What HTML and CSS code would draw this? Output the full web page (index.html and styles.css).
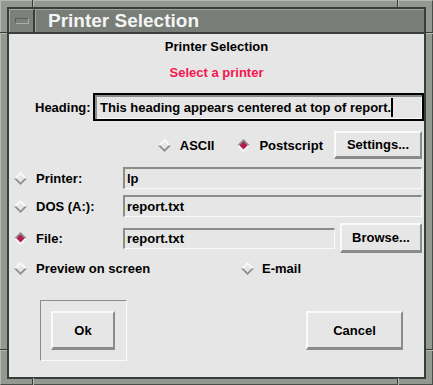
FILE: index.html
```html
<!DOCTYPE html>
<html>
<head>
<meta charset="utf-8">
<link rel="stylesheet" href="styles.css">
</head>
<body>
<div class="window">
  <span class="notch nv" style="left:31px;top:-1px"></span>
  <span class="notch nv" style="left:396px;top:-1px"></span>
  <span class="notch nv" style="left:31px;bottom:-1px"></span>
  <span class="notch nv" style="left:396px;bottom:-1px"></span>
  <span class="notch nh" style="top:31px;left:-1px"></span>
  <span class="notch nh" style="top:348px;left:-1px"></span>
  <span class="notch nh" style="top:31px;right:-1px"></span>
  <span class="notch nh" style="top:348px;right:-1px"></span>
  <div class="inner">
    <div class="titlerow">
      <div class="menubtn"><span class="menubar"></span></div>
      <div class="titlebar">Printer Selection</div>
    </div>
    <div class="content">
      <div class="heading">Printer Selection</div>
      <div class="prompt">Select a printer</div>
      <div class="head-row">
        <span class="head-label">Heading:</span>
        <div class="head-box"><span>This heading appears centered at top of report.</span><span class="caret"></span></div>
      </div>
      <div class="format-row">
        <svg class="radio r-ascii" width="13" height="13" viewBox="0 0 13 13"><polygon points="6.5,0 13,6.5 0,6.5" fill="#fafafa"/><polygon points="0,6.5 13,6.5 6.5,13" fill="#8a8e89"/><polygon points="6.5,2.5 10.5,6.5 6.5,10.5 2.5,6.5" fill="#e6e6e6"/></svg>
        <span class="ascii">ASCII</span>
        <svg class="radio r-ps" width="13" height="13" viewBox="0 0 13 13"><polygon points="6.5,0 13,6.5 0,6.5" fill="#8a8e89"/><polygon points="0,6.5 13,6.5 6.5,13" fill="#fafafa"/><polygon points="6.5,2.5 10.5,6.5 6.5,10.5 2.5,6.5" fill="#b51a55"/></svg>
        <span class="ps">Postscript</span>
        <button class="btn settings">Settings...</button>
      </div>
      <div class="dest-row">
        <div class="dest-label"><svg class="radio" width="13" height="13" viewBox="0 0 13 13"><polygon points="6.5,0 13,6.5 0,6.5" fill="#fafafa"/><polygon points="0,6.5 13,6.5 6.5,13" fill="#8a8e89"/><polygon points="6.5,2.5 10.5,6.5 6.5,10.5 2.5,6.5" fill="#e6e6e6"/></svg><span>Printer:</span></div>
        <div class="field">lp</div>
      </div>
      <div class="dest-row">
        <div class="dest-label"><svg class="radio" width="13" height="13" viewBox="0 0 13 13"><polygon points="6.5,0 13,6.5 0,6.5" fill="#fafafa"/><polygon points="0,6.5 13,6.5 6.5,13" fill="#8a8e89"/><polygon points="6.5,2.5 10.5,6.5 6.5,10.5 2.5,6.5" fill="#e6e6e6"/></svg><span>DOS (A:):</span></div>
        <div class="field">report.txt</div>
      </div>
      <div class="dest-row file-row">
        <div class="dest-label"><svg class="radio" width="13" height="13" viewBox="0 0 13 13"><polygon points="6.5,0 13,6.5 0,6.5" fill="#8a8e89"/><polygon points="0,6.5 13,6.5 6.5,13" fill="#fafafa"/><polygon points="6.5,2.5 10.5,6.5 6.5,10.5 2.5,6.5" fill="#b51a55"/></svg><span>File:</span></div>
        <div class="field">report.txt</div>
        <button class="btn browse">Browse...</button>
      </div>
      <div class="opt-row">
        <div class="opt preview"><svg class="radio" width="13" height="13" viewBox="0 0 13 13"><polygon points="6.5,0 13,6.5 0,6.5" fill="#fafafa"/><polygon points="0,6.5 13,6.5 6.5,13" fill="#8a8e89"/><polygon points="6.5,2.5 10.5,6.5 6.5,10.5 2.5,6.5" fill="#e6e6e6"/></svg><span>Preview on screen</span></div>
        <div class="opt email"><svg class="radio" width="13" height="13" viewBox="0 0 13 13"><polygon points="6.5,0 13,6.5 0,6.5" fill="#fafafa"/><polygon points="0,6.5 13,6.5 6.5,13" fill="#8a8e89"/><polygon points="6.5,2.5 10.5,6.5 6.5,10.5 2.5,6.5" fill="#e6e6e6"/></svg><span>E-mail</span></div>
      </div>
      <div class="action-row">
        <div class="default-frame"><button class="btn ok">Ok</button></div>
        <button class="btn cancel">Cancel</button>
      </div>
    </div>
  </div>
</div>
</body>
</html>
```

FILE: styles.css
```css
html, body {
  margin: 0;
  padding: 0;
  background: #939890;
}

.window {
  position: relative;
  width: 433px;
  height: 385px;
  box-sizing: border-box;
  background: #939890;
  border: 1px solid;
  border-color: #b4b9b2 #4a4d49 #4a4d49 #b4b9b2;
  padding: 6px 6px 5px 6px;
}

.notch {
  position: absolute;
  background: #3a3d3a;
}
.nv {
  width: 1px;
  height: 7px;
  box-shadow: 1px 0 0 #b4b9b2;
}
.nh {
  width: 7px;
  height: 1px;
  box-shadow: 0 1px 0 #b4b9b2;
}

.inner {
  height: 100%;
  box-sizing: border-box;
  border: 2px solid #3a3d3a;
  display: flex;
  flex-direction: column;
}

.titlerow {
  display: flex;
  height: 23px;
  border-bottom: 2px solid #3a3d3a;
  flex: none;
}

.menubtn {
  width: 24px;
  box-sizing: border-box;
  background: #7b807a;
  border-top: 1px solid #a4a9a2;
  border-left: 1px solid #a4a9a2;
  display: flex;
  align-items: center;
  justify-content: center;
  border-right: 2px solid #3a3d3a;
  width: 26px;
}

.menubar {
  width: 14px;
  height: 6px;
  box-sizing: border-box;
  border: 1px solid;
  border-color: #5b5f5a #a8ada6 #a8ada6 #5b5f5a;
  background: #7b807a;
}

.titlebar {
  flex: 1;
  background: #787d77;
  border-top: 1px solid #9ea39c;
  border-left: 1px solid #9ea39c;
  color: #f4f4f4;
  font: bold 19px/21px "Liberation Sans", Arial, sans-serif;
  padding-left: 12px;
}

.content {
  flex: 1;
  background: #e6e6e6;
  display: flex;
  flex-direction: column;
  padding-top: 5px;
  font: bold 13px/15px "Liberation Sans", Arial, sans-serif;
  color: #000;
}

.heading {
  text-align: center;
  height: 15px;
}

.prompt {
  text-align: center;
  color: #f5164e;
  margin-top: 11px;
  height: 15px;
}

.head-row {
  display: flex;
  align-items: center;
  margin-top: 13px;
  padding-left: 26px;
  padding-right: 0;
}

.head-label {
  width: 58px;
}

.head-box {
  flex: 1;
  height: 28px;
  box-sizing: border-box;
  border: 2px solid #000;
  box-shadow: inset 2px 2px 0 #8a8e89, inset -1px -1px 0 #fafafa;
  display: flex;
  align-items: center;
  padding-left: 5px;
  background: #e6e6e6;
}

.caret {
  width: 2px;
  height: 19px;
  background: #000;
  margin-left: 0;
}

.format-row {
  display: flex;
  align-items: center;
  justify-content: flex-end;
  margin-top: 10px;
  padding-right: 2px;
}

.radio {
  display: block;
  flex: none;
}

.r-ascii { margin-right: 9px; }
.ascii { margin-right: 23px; }
.r-ps { margin-right: 9px; }
.ps { margin-right: 11px; }

.btn {
  font: bold 13px/15px "Liberation Sans", Arial, sans-serif;
  color: #000;
  background: #e6e6e6;
  box-sizing: border-box;
  border-style: solid;
  border-width: 2px 2px 3px 2px;
  border-color: #fafafa #898d88 #898d88 #fafafa;
  padding: 0;
  margin: 0;
  text-align: center;
}

.settings {
  width: 88px;
  height: 28px;
}

.dest-row {
  display: flex;
  align-items: center;
  margin-top: 8px;
  padding-left: 5px;
  padding-right: 2px;
}
.dest-row + .dest-row {
  margin-top: 6px;
}

.dest-label {
  width: 109px;
  display: flex;
  align-items: center;
  gap: 9px;
  flex: none;
}

.field {
  flex: 1;
  height: 22px;
  box-sizing: border-box;
  border-style: solid;
  border-width: 2px 1px 1px 2px;
  border-color: #8a8e89 #fafafa #fafafa #8a8e89;
  padding-left: 2px;
  line-height: 19px;
}

.file-row .field {
  height: 21px;
  line-height: 18px;
}

.browse {
  width: 82px;
  height: 30px;
  margin-left: 5px;
}

.opt-row {
  display: flex;
  align-items: center;
  margin-top: 7px;
  padding-left: 5px;
  height: 16px;
}

.opt {
  display: flex;
  align-items: center;
  gap: 9px;
}

.preview {
  width: 227px;
}

.email {
  gap: 8px;
}

.action-row {
  display: flex;
  align-items: center;
  justify-content: space-between;
  margin-top: 24px;
  padding-left: 31px;
  padding-right: 21px;
}

.default-frame {
  box-sizing: border-box;
  border: 1px solid;
  border-color: #8a8e89 #fafafa #fafafa #8a8e89;
  padding: 10px 11px 10px 10px;
}

.ok {
  display: block;
  width: 64px;
  height: 39px;
}

.cancel {
  width: 97px;
  height: 39px;
}
```
